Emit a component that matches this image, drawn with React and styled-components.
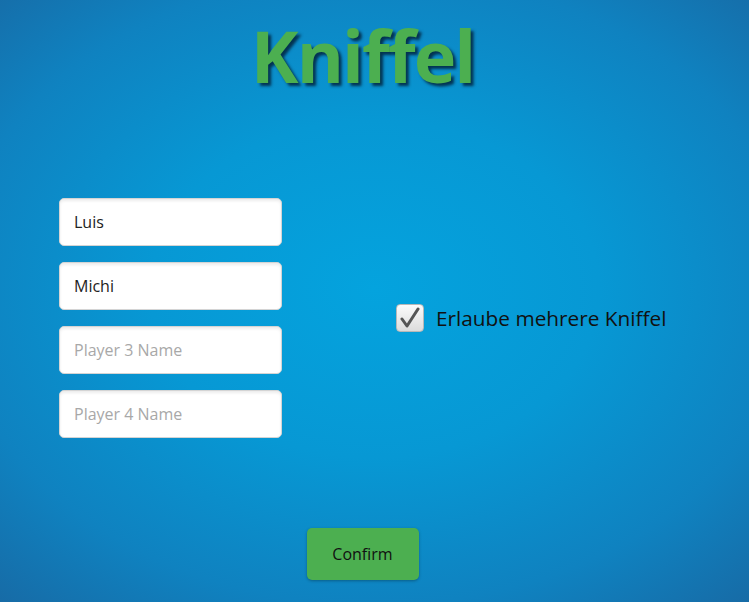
import React from "react";
import styled, { createGlobalStyle } from "styled-components";

const Global = createGlobalStyle`
  html, body { margin: 0; padding: 0; height: 100%; }
  body { font-family: "Open Sans", "Noto Sans", sans-serif; overflow: hidden; }
  #root { height: 100%; }
`;

const Page = styled.div`
  width: 749px;
  height: 602px;
  box-sizing: border-box;
  padding-right: 24px;
  display: flex;
  flex-direction: column;
  align-items: center;
  background: radial-gradient(ellipse 75% 70% at 50% 48%, #04a3de 0%, #0798d4 40%, #0f82c0 75%, #176ba6 100%);
`;

const Title = styled.h1`
  margin: 10px 0 0;
  height: 90px;
  font-family: "Open Sans", sans-serif;
  font-weight: 700;
  font-size: 72px;
  line-height: 90px;
  letter-spacing: -2px;
  color: #4caf50;
  text-shadow: 3px 3px 3px rgba(0, 20, 40, 0.75);
`;

const Middle = styled.div`
  align-self: stretch;
  margin-top: 98px;
  display: grid;
  grid-template-columns: 337px 1fr;
  align-items: center;
  padding-left: 59px;
`;

const Inputs = styled.div`
  display: flex;
  flex-direction: column;
  gap: 16px;
`;

const NameInput = styled.input`
  box-sizing: border-box;
  width: 223px;
  height: 48px;
  padding: 0 14px;
  border: 1px solid #d4d4d4;
  border-radius: 5px;
  background: #fff;
  box-shadow: inset 0 2px 3px rgba(0, 0, 0, 0.08);
  font-family: "Open Sans", sans-serif;
  font-size: 16px;
  color: #222;
  outline: none;
  &::placeholder { color: #a8a8a8; }
`;

const CheckLabel = styled.label`
  display: flex;
  align-items: center;
  gap: 12px;
  font-family: "Open Sans", sans-serif;
  font-size: 20.8px;
  color: #111;
`;

const Box = styled.span`
  width: 28px;
  height: 28px;
  box-sizing: border-box;
  border: 1px solid #b8b8b8;
  border-radius: 4px;
  background: linear-gradient(#fbfbfb, #dcdcdc);
  display: flex;
  align-items: center;
  justify-content: center;
`;

const Footer = styled.div`
  margin-top: 90px;
`;

const Button = styled.button`
  width: 112px;
  height: 52px;
  border: none;
  border-radius: 5px;
  background: #4caf50;
  box-shadow: 0 1px 3px rgba(0, 0, 0, 0.3);
  font-family: "Open Sans", sans-serif;
  font-size: 16px;
  color: #111;
  cursor: pointer;
`;

export default function App() {
  return (
    <>
      <Global />
      <Page>
        <Title>Kniffel</Title>
        <Middle>
          <Inputs>
            <NameInput defaultValue="Luis" placeholder="Player 1 Name" />
            <NameInput defaultValue="Michi" placeholder="Player 2 Name" />
            <NameInput placeholder="Player 3 Name" />
            <NameInput placeholder="Player 4 Name" />
          </Inputs>
          <CheckLabel>
            <Box>
              <svg width="20" height="22" viewBox="0 0 20 22">
                <path d="M2 12 L7 19 L18 2" fill="none" stroke="#555" strokeWidth="3" strokeLinejoin="round" strokeLinecap="round" />
              </svg>
            </Box>
            Erlaube mehrere Kniffel
          </CheckLabel>
        </Middle>
        <Footer>
          <Button>Confirm</Button>
        </Footer>
      </Page>
    </>
  );
}
